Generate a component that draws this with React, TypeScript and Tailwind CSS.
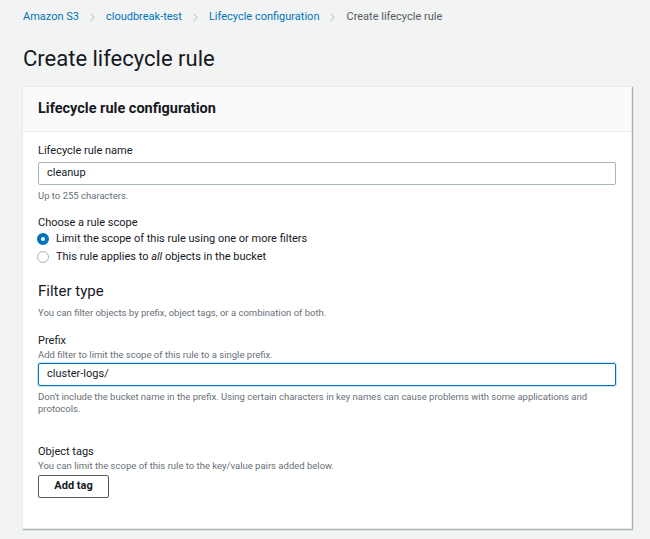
import { ChevronRight } from "lucide-react";

const font = { fontFamily: 'Roboto, "Liberation Sans", Arial, sans-serif' };

function Crumbs() {
  const items = ["Amazon S3", "cloudbreak-test", "Lifecycle configuration"];
  return (
    <nav className="flex items-center h-[34px] pl-[23px] text-[11px]">
      {items.map((item) => (
        <div key={item} className="flex items-center">
          <span className="text-[#0073bb]">{item}</span>
          <ChevronRight className="mx-[7px] w-[13px] h-[13px] text-[#aab7b8]" strokeWidth={1.75} />
        </div>
      ))}
      <span className="text-[#545b64]">Create lifecycle rule</span>
    </nav>
  );
}

function Radio({ checked, children }: { checked?: boolean; children: React.ReactNode }) {
  return (
    <div className="flex items-center h-[18px]">
      {checked ? (
        <span className="w-[12px] h-[12px] rounded-full border-[4px] border-[#0073bb] bg-white ml-[-1px]" />
      ) : (
        <span className="w-[12px] h-[12px] rounded-full border border-[#aab7b8] bg-white ml-[-1px]" />
      )}
      <span className="ml-[7px] text-[11px] text-[#16191f]">{children}</span>
    </div>
  );
}

export default function App() {
  return (
    <div className="min-h-[539px] bg-[#f2f3f3] text-[#16191f] overflow-hidden" style={font}>
      <Crumbs />
      <h1 className="pl-[23px] pt-[10px] text-[22px] leading-[30px] font-normal">Create lifecycle rule</h1>

      <div className="ml-[22px] mr-[18px] mt-[12px] bg-white border border-[#eaeded] shadow-[1px_1px_1px_0_rgba(0,28,36,0.3)]">
        <div className="bg-[#fafafa] border-b border-[#eaeded] h-[45px] flex items-center px-[15px]">
          <h2 className="text-[14.5px] font-bold">Lifecycle rule configuration</h2>
        </div>

        <div className="pl-[15px] pr-[15px] pt-[11px] pb-[30px]">
          <label className="block text-[11px] leading-[16px]">Lifecycle rule name</label>
          <div className="mt-[3px] h-[23px] border border-[#aab7b8] rounded-[2px] flex items-center px-[8px] text-[11px]">
            cleanup
          </div>
          <p className="mt-[4px] text-[9.5px] leading-[13px] text-[#687078]">Up to 255 characters.</p>

          <p className="mt-[13px] text-[11px] leading-[15px]">Choose a rule scope</p>
          <Radio checked>Limit the scope of this rule using one or more filters</Radio>
          <Radio>
            This rule applies to <i>all</i> objects in the bucket
          </Radio>

          <h3 className="mt-[14px] text-[15px] leading-[22px]">Filter type</h3>
          <p className="mt-[4px] text-[9.5px] leading-[13px] text-[#687078]">
            You can filter objects by prefix, object tags, or a combination of both.
          </p>

          <p className="mt-[15px] text-[11px] leading-[14px]">Prefix</p>
          <p className="text-[9.5px] leading-[13px] text-[#687078]">
            Add filter to limit the scope of this rule to a single prefix.
          </p>
          <div className="mt-[2px] h-[23px] border border-[#0073bb] rounded-[2px] flex items-center px-[8px] text-[11px] shadow-[0_0_0_1px_rgba(0,115,187,0.2)]">
            cluster-logs/
          </div>
          <p className="mt-[5px] text-[9.5px] leading-[12px] text-[#687078]">
            Don't include the bucket name in the prefix. Using certain characters in key names can cause problems with some applications and protocols.
          </p>

          <p className="mt-[30px] text-[11px] leading-[14px]">Object tags</p>
          <p className="text-[9.5px] leading-[13px] text-[#687078]">
            You can limit the scope of this rule to the key/value pairs added below.
          </p>
          <button className="mt-[1px] h-[23px] w-[71px] border border-[#545b64] rounded-[2px] bg-white text-[11px] font-bold text-[#16191f]">
            Add tag
          </button>
        </div>
      </div>
    </div>
  );
}
